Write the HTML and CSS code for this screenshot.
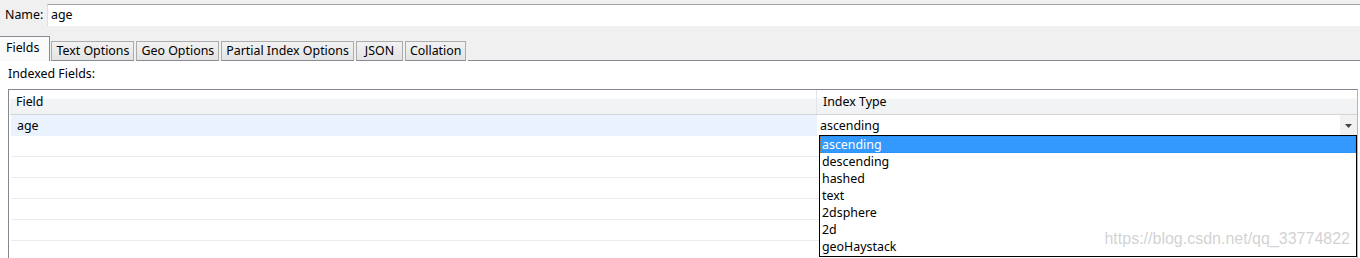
FILE: index.html
```html
<!DOCTYPE html>
<html>
<head>
<meta charset="utf-8">
<link rel="stylesheet" href="styles.css">
</head>
<body>
<div class="page">
  <div class="top">
    <div class="name-row">
      <span class="name-label">Name:</span>
      <div class="name-input">age</div>
    </div>
    <div class="tabs">
      <div class="tab active">Fields</div>
      <div class="tab">Text Options</div>
      <div class="tab">Geo Options</div>
      <div class="tab">Partial Index Options</div>
      <div class="tab">JSON</div>
      <div class="tab">Collation</div>
      <div class="tab-fill"></div>
    </div>
  </div>
  <div class="panel">
    <div class="section-label">Indexed Fields:</div>
    <div class="table">
      <div class="thead">
        <div class="th th-field">Field</div>
        <div class="th th-type">Index Type</div>
      </div>
      <div class="row row-first">
        <div class="cell cell-field">age</div>
        <div class="cell cell-type">
          <span class="combo-text">ascending</span>
          <span class="combo-btn"><svg width="7" height="4" viewBox="0 0 7 4"><path d="M0 0H7L3.5 4Z" fill="#444"/></svg></span>
        </div>
      </div>
      <div class="row"></div>
      <div class="row"></div>
      <div class="row"></div>
      <div class="row"></div>
      <div class="row"></div>
      <div class="row"></div>
    </div>
    <div class="dropdown">
      <div class="opt selected">ascending</div>
      <div class="opt">descending</div>
      <div class="opt">hashed</div>
      <div class="opt">text</div>
      <div class="opt">2dsphere</div>
      <div class="opt">2d</div>
      <div class="opt">geoHaystack</div>
    </div>
    <div class="watermark">https://blog.csdn.net/qq_33774822</div>
  </div>
</div>
</body>
</html>
```
FILE: styles.css
```css
html, body {
  margin: 0;
  padding: 0;
}
body {
  width: 1360px;
  height: 258px;
  overflow: hidden;
  background: #ffffff;
  font-family: "Noto Sans", "Open Sans", sans-serif;
  font-size: 12.4px;
  color: #000;
}
.page {
  position: relative;
  width: 1360px;
  height: 258px;
}
.top {
  background: #f0f0f0;
  height: 61px;
  display: flex;
  flex-direction: column;
}
.name-row {
  display: flex;
  align-items: center;
  height: 23px;
  margin-top: 3px;
}
.name-label {
  width: 42px;
  padding-left: 5px;
  line-height: 22px;
}
.name-input {
  flex: 1;
  height: 22px;
  box-sizing: border-box;
  background: #fff;
  border-top: 1px solid #a5a5a5;
  border-left: 1px solid #e0e0e0;
  padding-left: 3px;
  line-height: 20px;
}
.tabs {
  display: flex;
  align-items: flex-end;
  margin-top: 10px;
  height: 25px;
}
.tab {
  height: 20px;
  min-width: 47px;
  box-sizing: border-box;
  border: 1px solid #acacac;
  border-bottom: 1px solid #898c95;
  background: linear-gradient(#f2f2f2, #e3e3e3);
  padding: 0 4px;
  line-height: 18px;
  margin-right: 2px;
  text-align: center;
  white-space: nowrap;
}
.tab.active {
  height: 25px;
  border: none;
  border-right: 1px solid #898c95;
  border-top: 1px solid #898c95;
  background: #fafafa;
  padding: 0 10px 0 6px;
  line-height: 21px;
  margin-right: 1px;
}
.tab-fill {
  flex: 1;
  height: 1px;
  background: #898c95;
}
.panel {
  position: relative;
  height: 197px;
}
.section-label {
  padding-left: 8px;
  height: 28px;
  line-height: 26px;
}
.table {
  margin-left: 8px;
  width: 1350px;
  box-sizing: border-box;
  border: 1px solid #828790;
  border-right: 1px solid #b5b5b5;
  height: 180px;
  padding-left: 1px;
  overflow: hidden;
}
.thead {
  display: flex;
  height: 24px;
  border-bottom: 1px solid #d5d5d5;
  background: linear-gradient(#ffffff 0, #ffffff 35%, #f3f4f6 36%, #f1f2f4 100%);
}
.th {
  line-height: 24px;
}
.th-field {
  width: 807px;
  padding-left: 6px;
  box-sizing: border-box;
  border-right: 1px solid #e4e5e7;
}
.th-type {
  flex: 1;
  padding-left: 6px;
}
.row {
  height: 20px;
  border-bottom: 1px solid #ececec;
  margin-left: 1px;
}
.row-first {
  display: flex;
  height: 21px;
  border-bottom: none;
}
.cell-field {
  width: 806px;
  background: #eaf3fd;
  padding-left: 6px;
  box-sizing: border-box;
  line-height: 22px;
}
.cell-type {
  flex: 1;
  display: flex;
  align-items: center;
  background: #fff;
  padding-left: 3px;
}
.combo-text {
  flex: 1;
  line-height: 19px;
}
.combo-btn {
  width: 17px;
  height: 21px;
  background: #f1f1f1;
  display: flex;
  align-items: center;
  justify-content: center;
}
.dropdown {
  position: absolute;
  left: 819px;
  top: 74px;
  width: 538px;
  height: 122px;
  box-sizing: border-box;
  border: 1px solid #000;
  background: #fff;
}
.opt {
  height: 17px;
  line-height: 17px;
  padding-left: 2px;
}
.opt.selected {
  background: #3399ff;
  color: #fff;
  outline: 1px dotted #b86d1e;
  outline-offset: -1px;
}
.watermark {
  position: absolute;
  right: 10px;
  top: 169px;
  font-family: "Liberation Sans", Arial, sans-serif;
  font-size: 16px;
  color: rgba(190, 190, 190, 0.7);
  pointer-events: none;
}
```
